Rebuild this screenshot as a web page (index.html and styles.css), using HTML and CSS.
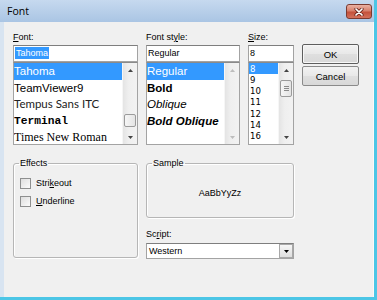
FILE: index.html
```html
<!DOCTYPE html>
<html>
<head>
<meta charset="utf-8">
<link rel="stylesheet" href="styles.css">
</head>
<body>
<div class="window">
  <div class="titlebar">
    <span class="title">Font</span>
    <div class="close">
      <svg width="10" height="8" viewBox="0 0 10 8"><path d="M2 1 L8 7 M8 1 L2 7" stroke="#6a261d" stroke-width="3.2" stroke-linecap="round"/><path d="M2 1 L8 7 M8 1 L2 7" stroke="#fff" stroke-width="1.7" stroke-linecap="round"/></svg>
    </div>
  </div>
  <div class="client">
    <div class="top">
      <div class="col">
        <div class="label"><u>F</u>ont:</div>
        <div class="field"><span class="sel">Tahoma</span></div>
        <div class="list">
          <div class="items font-items">
            <div class="item selected f-tahoma">Tahoma</div>
            <div class="item f-tahoma">TeamViewer9</div>
            <div class="item f-tempus">Tempus Sans ITC</div>
            <div class="item f-terminal">Terminal</div>
            <div class="item f-times">Times New Roman</div>
          </div>
          <div class="sbar">
            <div class="arrow"><svg width="5" height="3" viewBox="0 0 5 3"><polygon points="0,3 2.5,0 5,3" fill="#444"/></svg></div>
            <div class="track end"><div class="thumb small"></div></div>
            <div class="arrow"><svg width="5" height="3" viewBox="0 0 5 3"><polygon points="0,0 5,0 2.5,3" fill="#444"/></svg></div>
          </div>
        </div>
      </div>
      <div class="col">
        <div class="label">Font st<u>y</u>le:</div>
        <div class="field">Regular</div>
        <div class="list">
          <div class="items style-items">
            <div class="item selected">Regular</div>
            <div class="item s-bold">Bold</div>
            <div class="item s-italic">Oblique</div>
            <div class="item s-bolditalic">Bold Oblique</div>
          </div>
          <div class="sbar">
            <div class="arrow"><svg width="5" height="3" viewBox="0 0 5 3"><polygon points="0,3 2.5,0 5,3" fill="#bdbdbd"/></svg></div>
            <div class="track"></div>
            <div class="arrow"><svg width="5" height="3" viewBox="0 0 5 3"><polygon points="0,0 5,0 2.5,3" fill="#bdbdbd"/></svg></div>
          </div>
        </div>
      </div>
      <div class="col">
        <div class="label"><u>S</u>ize:</div>
        <div class="field">8</div>
        <div class="list">
          <div class="items size-items">
            <div class="item selected">8</div>
            <div class="item">9</div>
            <div class="item">10</div>
            <div class="item">11</div>
            <div class="item">12</div>
            <div class="item">14</div>
            <div class="item">16</div>
          </div>
          <div class="sbar">
            <div class="arrow"><svg width="5" height="3" viewBox="0 0 5 3"><polygon points="0,3 2.5,0 5,3" fill="#444"/></svg></div>
            <div class="track start"><div class="thumb tall"><svg width="5" height="5" viewBox="0 0 5 5"><path d="M0 0.5 H5 M0 2.5 H5 M0 4.5 H5" stroke="#8a8a8a" stroke-width="1"/></svg></div></div>
            <div class="arrow"><svg width="5" height="3" viewBox="0 0 5 3"><polygon points="0,0 5,0 2.5,3" fill="#444"/></svg></div>
          </div>
        </div>
      </div>
      <div class="buttons">
        <button class="btn default">OK</button>
        <button class="btn">Cancel</button>
      </div>
    </div>
    <div class="bottom">
      <fieldset class="group effects">
        <legend>Effects</legend>
        <div class="check first"><span class="box"></span><span>Stri<u>k</u>eout</span></div>
        <div class="check"><span class="box"></span><span><u>U</u>nderline</span></div>
      </fieldset>
      <div class="right">
        <fieldset class="group sample">
          <legend>Sample</legend>
          <div class="sample-text">AaBbYyZz</div>
        </fieldset>
        <div class="label script-label">Sc<u>r</u>ipt:</div>
        <div class="combo">
          <span>Western</span>
          <span class="drop"><svg width="5" height="3" viewBox="0 0 5 3"><polygon points="0,0 5,0 2.5,3" fill="#000"/></svg></span>
        </div>
      </div>
    </div>
  </div>
</div>
</body>
</html>
```

FILE: styles.css
```css
body {
  margin: 0;
  width: 377px;
  height: 300px;
  overflow: hidden;
  font-family: "Liberation Sans", Arial, sans-serif;
  font-size: 9px;
  color: #000;
  background: #4cc6e6;
}

.window {
  height: 300px;
  box-sizing: border-box;
  border-right: 3px solid #4cc6e6;
  border-bottom: 3px solid #4cc6e6;
  display: flex;
  flex-direction: column;
}

.titlebar {
  height: 22px;
  flex: none;
  background: linear-gradient(#c6d9ef, #aac5e4);
  display: flex;
  align-items: center;
  justify-content: space-between;
  padding: 0 2px 0 7px;
}

.title {
  font-family: "Open Sans", "Liberation Sans", sans-serif;
  font-size: 10.5px;
  color: #000;
}

.close {
  width: 26px;
  height: 15px;
  box-sizing: border-box;
  margin-top: 1px;
  border: 1px solid #7b3a30;
  border-radius: 3px;
  background: linear-gradient(#eab1a3, #d77f6b 45%, #c4513b 55%, #d3705b);
  display: flex;
  align-items: center;
  justify-content: center;
}

.client {
  flex: 1;
  background: #f0f0f0;
  border-left: 4px solid #d8e4f1;
  border-right: 1px solid #f9f9f9;
  padding: 9px 0 0 9px;
}

.top {
  display: grid;
  grid-template-columns: 125px 94px 46px 57px;
  column-gap: 8px;
  align-items: start;
}

.label {
  height: 13px;
  line-height: 13px;
  white-space: nowrap;
}

.field {
  height: 17px;
  box-sizing: border-box;
  margin-top: 1px;
  border: 1px solid #a3a3a3;
  border-top-color: #7e7e7e;
  background: #fff;
  padding: 0 1px;
  line-height: 15px;
  white-space: nowrap;
  overflow: hidden;
}

.sel {
  background: #3399ff;
  color: #fff;
  padding: 1px 1px;
}

.list {
  height: 83px;
  box-sizing: border-box;
  border: 1px solid #a3a3a3;
  border-top-color: #8a8a8a;
  background: #fff;
  display: flex;
  overflow: hidden;
}

.items {
  flex: 1;
  min-width: 0;
  overflow: hidden;
}

.item {
  white-space: nowrap;
}

.item.selected {
  background: #3399ff;
  color: #fff;
}

.font-items .item {
  height: 16.6px;
  line-height: 16.6px;
  font-size: 11.5px;
}

.f-tahoma { font-family: "Liberation Sans", sans-serif; }
.f-tempus { font-family: Lato, "Liberation Sans", sans-serif; color: #222; }
.f-terminal { font-family: "Liberation Mono", monospace; font-weight: bold; font-size: 11.25px !important; }
.f-times { font-family: "Liberation Serif", serif; font-size: 12px !important; }

.style-items .item {
  height: 16.6px;
  line-height: 16.6px;
  font-size: 11.5px;
}

.s-bold { font-weight: bold; }
.s-italic { font-style: italic; }
.s-bolditalic { font-weight: bold; font-style: italic; }

.size-items .item {
  height: 11.15px;
  line-height: 11.15px;
  font-family: "Liberation Sans Narrow", "DejaVu Sans Condensed", "Liberation Sans", sans-serif;
  font-size: 9.5px;
  padding-left: 1px;
}

.sbar {
  width: 15px;
  flex: none;
  display: flex;
  flex-direction: column;
  box-sizing: border-box;
  background: linear-gradient(90deg, #e4e4e4, #efefef 40%, #f2f2f2);
  border-left: 1px solid #f6f6f6;
}

.arrow {
  height: 14px;
  flex: none;
  display: flex;
  align-items: center;
  justify-content: center;
}

.track {
  flex: 1;
  display: flex;
  flex-direction: column;
}

.track.end {
  justify-content: flex-end;
  padding-bottom: 3px;
}

.track.start {
  padding-top: 3px;
}

.thumb {
  margin: 0 1px 0 1px;
  box-sizing: border-box;
  border: 1px solid #9b9b9b;
  border-radius: 2px;
  background: linear-gradient(90deg, #f6f6f6, #e4e4e4);
  display: flex;
  align-items: center;
  justify-content: center;
}

.thumb.small { height: 13px; }
.thumb.tall { height: 17px; }

.buttons {
  display: flex;
  flex-direction: column;
  gap: 2px;
  margin-top: 13px;
}

.btn {
  height: 20px;
  padding: 0;
  font-family: "Liberation Sans", Arial, sans-serif;
  font-size: 9.5px;
  color: #000;
  border: 1px solid #8a8a8a;
  border-radius: 2px;
  background: linear-gradient(#f2f2f2, #e8e8e8 50%, #dfdfdf 50%, #d8d8d8);
}

.btn.default {
  border-color: #5e5e5e;
  box-shadow: inset 0 0 0 1px #f7f7f7;
}

.bottom {
  display: grid;
  grid-template-columns: 125px 148px;
  column-gap: 8px;
  align-items: start;
  margin-top: 12px;
}

.group {
  margin: 0;
  padding: 0 5px;
  min-width: 0;
  border: 1px solid #b6b6b6;
  border-radius: 3px;
  box-shadow: inset 1px 1px 0 #fff, 1px 1px 0 #fff;
}

.group legend {
  padding: 0 1px;
  line-height: 12px;
  font-size: 9px;
}

.effects {
  height: 101px;
  box-sizing: border-box;
}

.check {
  display: flex;
  align-items: center;
  gap: 5px;
  height: 18px;
  margin-left: 1px;
}

.check.first {
  margin-top: 5px;
}

.box {
  width: 11px;
  height: 11px;
  box-sizing: border-box;
  border: 1px solid #8e8f8f;
  background: linear-gradient(135deg, #dedede, #fbfbfb);
}

.right {
  display: flex;
  flex-direction: column;
}

.sample-text {
  height: 48px;
  display: flex;
  align-items: center;
  justify-content: center;
}

.script-label {
  margin-top: 10px;
}

.combo {
  height: 16px;
  box-sizing: border-box;
  margin-top: 2px;
  border: 1px solid #a3a3a3;
  border-top-color: #7e7e7e;
  background: #fff;
  display: flex;
  align-items: stretch;
  padding-left: 2px;
  line-height: 14px;
}

.drop {
  margin: 0 0 0 auto;
  width: 14px;
  box-sizing: border-box;
  border: 1px solid #a8a8a8;
  background: linear-gradient(#f6f6f6, #dedede);
  display: flex;
  align-items: center;
  justify-content: center;
}
```
